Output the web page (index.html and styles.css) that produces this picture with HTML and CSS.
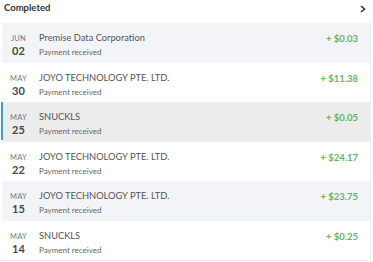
FILE: index.html
```html
<!DOCTYPE html>
<html>
<head>
<meta charset="utf-8">
<link rel="stylesheet" href="styles.css">
</head>
<body>
<div class="panel">
  <div class="header">
    <span class="title">Completed</span>
    <svg class="chev" width="6" height="8" viewBox="0 0 6 8"><path d="M1 1 L4.5 4 L1 7" fill="none" stroke="#333" stroke-width="1.6"/></svg>
  </div>
  <div class="list">
    <div class="row alt">
      <div class="date"><span class="mon">JUN</span><span class="day">02</span></div>
      <div class="info"><span class="name">Premise Data Corporation</span><span class="sub">Payment received</span></div>
      <div class="amt">+ $0.03</div>
    </div>
    <div class="row">
      <div class="date"><span class="mon">MAY</span><span class="day">30</span></div>
      <div class="info"><span class="name">JOYO TECHNOLOGY PTE. LTD.</span><span class="sub">Payment received</span></div>
      <div class="amt">+ $11.38</div>
    </div>
    <div class="row active">
      <div class="date"><span class="mon">MAY</span><span class="day">25</span></div>
      <div class="info"><span class="name">SNUCKLS</span><span class="sub">Payment received</span></div>
      <div class="amt">+ $0.05</div>
    </div>
    <div class="row">
      <div class="date"><span class="mon">MAY</span><span class="day">22</span></div>
      <div class="info"><span class="name">JOYO TECHNOLOGY PTE. LTD.</span><span class="sub">Payment received</span></div>
      <div class="amt">+ $24.17</div>
    </div>
    <div class="row alt">
      <div class="date"><span class="mon">MAY</span><span class="day">15</span></div>
      <div class="info"><span class="name">JOYO TECHNOLOGY PTE. LTD.</span><span class="sub">Payment received</span></div>
      <div class="amt">+ $23.75</div>
    </div>
    <div class="row">
      <div class="date"><span class="mon">MAY</span><span class="day">14</span></div>
      <div class="info"><span class="name">SNUCKLS</span><span class="sub">Payment received</span></div>
      <div class="amt">+ $0.25</div>
    </div>
  </div>
</div>
</body>
</html>
```

FILE: styles.css
```css
html, body {
  margin: 0;
  padding: 0;
  background: #fff;
}
body {
  font-family: "Lato", "Open Sans", sans-serif;
  color: #444;
}
.panel {
  width: 371px;
  padding-left: 2px;
  box-sizing: border-box;
}
.header {
  height: 23px;
  display: flex;
  align-items: flex-start;
  justify-content: space-between;
  padding: 2px 5px 0 2px;
  box-sizing: border-box;
}
.title {
  font-size: 9.5px;
  font-weight: 700;
  color: #333;
  line-height: 12px;
}
.chev {
  margin-top: 3px;
}
.list {
  border-right: 1px solid #eeeeee;
  border-bottom: 1px solid #eeeeee;
}
.row {
  height: 39.5px;
  display: flex;
  align-items: flex-start;
  box-sizing: border-box;
  padding: 11px 12px 0 0;
  position: relative;
}
.row.alt {
  background: #f3f4f8;
}
.row.active {
  background: #ececec;
}
.row.active::before {
  content: "";
  position: absolute;
  left: -1px;
  top: 0;
  bottom: 2px;
  width: 2px;
  background: #3d9ad6;
}
.date {
  width: 33px;
  display: flex;
  flex-direction: column;
  align-items: center;
}
.mon {
  font-size: 7.5px;
  color: #777;
  line-height: 9px;
  letter-spacing: 0.2px;
}
.day {
  font-size: 11px;
  font-weight: 700;
  color: #484848;
  line-height: 13px;
  margin-top: 1px;
}
.info {
  flex: 1;
  display: flex;
  flex-direction: column;
  padding-left: 4px;
}
.name {
  font-size: 9.3px;
  color: #555;
  line-height: 11px;
  margin-top: -2px;
}
.sub {
  font-size: 8px;
  color: #666;
  line-height: 10px;
  margin-top: 4px;
}
.amt {
  font-size: 9.5px;
  font-weight: 700;
  color: #62b662;
  line-height: 12px;
  margin-top: -1px;
}
```
